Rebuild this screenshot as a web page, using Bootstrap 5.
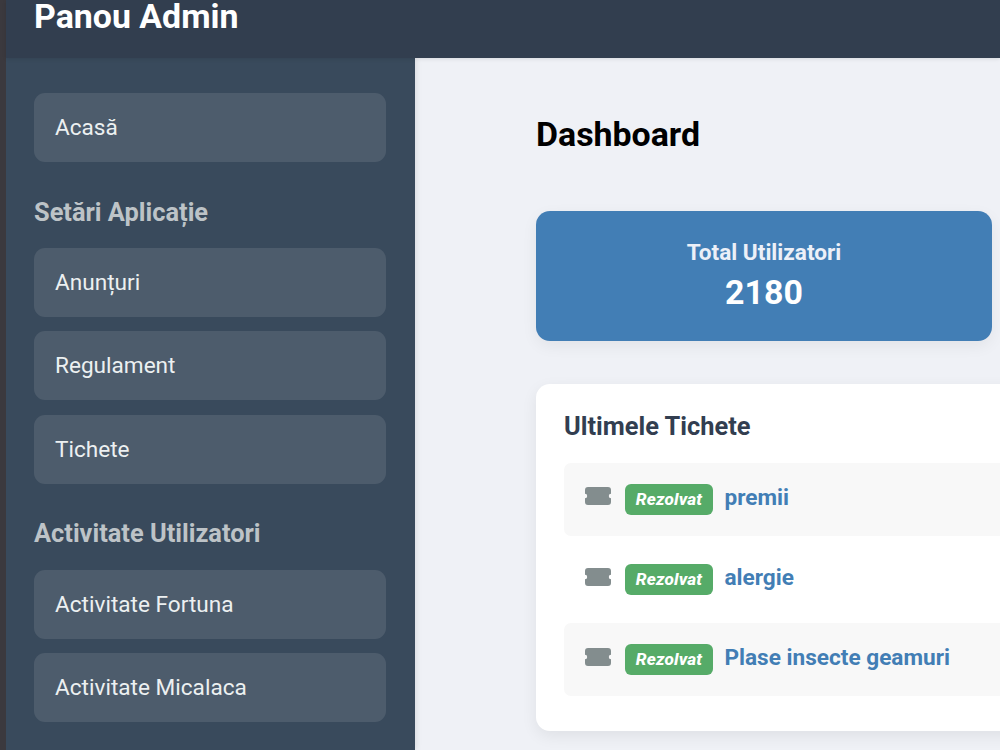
<!DOCTYPE html>
<html lang="ro">
<head>
<meta charset="utf-8">
<meta name="viewport" content="width=device-width, initial-scale=1">
<title>Panou Admin</title>
<link rel="stylesheet" href="https://cdn.jsdelivr.net/npm/bootstrap@5.3.0/dist/css/bootstrap.min.css">
<style>
body{font-family:Roboto,sans-serif;font-size:22.6px;background:#3b393e;height:750px;overflow:hidden}
.shell{margin-left:6px;height:750px;background:#eff1f6}
.topbar{height:57.5px;background:#323e4f;color:#fff;padding:0 28px;box-shadow:0 1px 4px rgba(0,0,0,.1);z-index:2;position:relative}
.topbar h1{font-size:33.9px;line-height:34px;font-weight:700;margin:0}
.side{width:408.6px;background:#394a5c;padding:35.7px 28.2px 0 28px;box-shadow:1px 0 6px rgba(0,0,0,.1)}
.side .nav-link{height:69px;line-height:69px;padding:0 21px;border-radius:11px;background:#4d5c6c;color:#ecf0f1;margin-bottom:14.2px}
.side h2{font-size:25.4px;font-weight:700;color:#bdc3c7;line-height:30px;margin:20.6px 0 21.2px}
.main-area{padding:57px 0 0 121.4px}
.main-area h2{font-size:33.9px;font-weight:700;color:#000;line-height:39px;margin:0 0 57.2px}
.stat{width:456px;height:130px;border-radius:14px;background:#427eb5;box-shadow:0 5px 16px rgba(0,0,0,.06);padding-top:28px;color:#fff;margin-bottom:42.9px}
.stat h3{font-size:22.6px;font-weight:700;line-height:27px;margin:0;color:#ecf0f8}
.stat p{font-size:33.9px;font-weight:700;line-height:40px;margin:7px 0 0}
.tickets{width:900px;height:347.8px;border-radius:14px;background:#fff;box-shadow:0 5px 16px rgba(0,0,0,.07);padding:27.8px 28px}
.tickets h3{font-size:25.4px;font-weight:700;color:#323e50;line-height:30px;margin:0 0 21.3px}
.tickets li{height:73px;border-radius:7px;padding:0 21px;margin-bottom:7.4px}
.tickets li:nth-child(odd){background:#f8f8f8}
.tickets svg{width:26px;height:18px;margin:-6px 14px 0 0}
.tag{font-size:17.2px;font-weight:800;font-style:italic;line-height:30px;height:31px;width:88px;border-radius:6px;background:#56ab68;color:#fff;margin-right:11.5px;letter-spacing:.15px}
.tickets a{font-weight:700;color:#427eb5;line-height:27px;margin-top:-4px}
</style>
</head>
<body>
<div class="shell d-flex flex-column">
  <header class="topbar flex-shrink-0"><h1>Panou Admin</h1></header>
  <div class="d-flex flex-grow-1 overflow-hidden">
    <nav class="side nav flex-column flex-nowrap flex-shrink-0">
      <a class="nav-link" href="#">Acasă</a>
      <h2>Setări Aplicație</h2>
      <a class="nav-link" href="#">Anunțuri</a>
      <a class="nav-link" href="#">Regulament</a>
      <a class="nav-link" href="#">Tichete</a>
      <h2>Activitate Utilizatori</h2>
      <a class="nav-link" href="#">Activitate Fortuna</a>
      <a class="nav-link" href="#">Activitate Micalaca</a>
    </nav>
    <main class="main-area">
      <h2>Dashboard</h2>
      <section class="stat text-center"><h3>Total Utilizatori</h3><p>2180</p></section>
      <section class="tickets">
        <h3>Ultimele Tichete</h3>
        <ul class="list-unstyled mb-0">
          <li class="d-flex align-items-center"><svg viewBox="0 0 26 18" fill="#838d8e"><path d="M3 0H23Q26 0 26 3V6.8A2.2 2.2 0 0 0 26 11.2V15Q26 18 23 18H3Q0 18 0 15V11.2A2.2 2.2 0 0 0 0 6.8V3Q0 0 3 0Z"/></svg><span class="tag text-center">Rezolvat</span><a class="text-decoration-none" href="#">premii</a></li>
          <li class="d-flex align-items-center"><svg viewBox="0 0 26 18" fill="#838d8e"><path d="M3 0H23Q26 0 26 3V6.8A2.2 2.2 0 0 0 26 11.2V15Q26 18 23 18H3Q0 18 0 15V11.2A2.2 2.2 0 0 0 0 6.8V3Q0 0 3 0Z"/></svg><span class="tag text-center">Rezolvat</span><a class="text-decoration-none" href="#">alergie</a></li>
          <li class="d-flex align-items-center"><svg viewBox="0 0 26 18" fill="#838d8e"><path d="M3 0H23Q26 0 26 3V6.8A2.2 2.2 0 0 0 26 11.2V15Q26 18 23 18H3Q0 18 0 15V11.2A2.2 2.2 0 0 0 0 6.8V3Q0 0 3 0Z"/></svg><span class="tag text-center">Rezolvat</span><a class="text-decoration-none" href="#">Plase insecte geamuri</a></li>
        </ul>
      </section>
    </main>
  </div>
</div>
<script src="https://cdn.jsdelivr.net/npm/bootstrap@5.3.0/dist/js/bootstrap.bundle.min.js"></script>
</body>
</html>
